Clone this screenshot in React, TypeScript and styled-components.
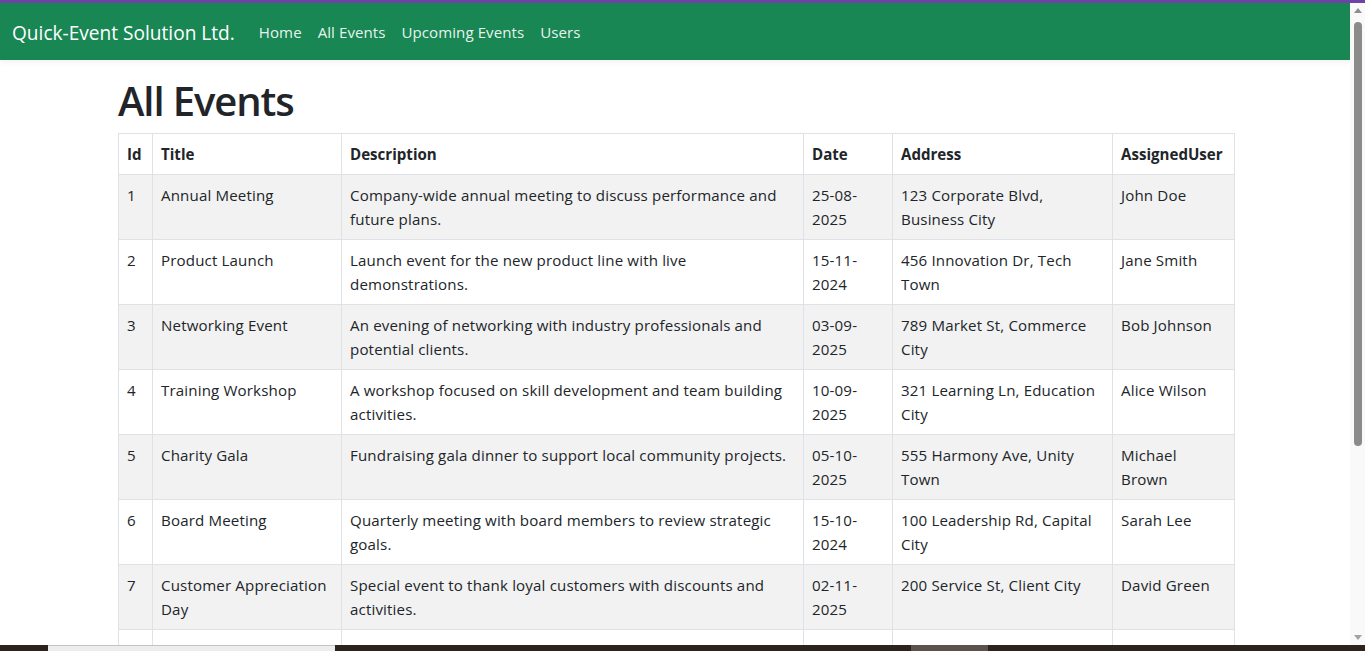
import React from "react";
import styled, { createGlobalStyle } from "styled-components";

const GlobalStyle = createGlobalStyle`
  html, body { margin: 0; padding: 0; overflow: hidden; background: #fff; }
  body {
    font-family: "Open Sans", "Noto Sans", sans-serif;
    font-size: 15.1px;
    line-height: 24px;
    color: #212529;
  }
  * { box-sizing: border-box; }
`;

type EventRow = {
  id: number;
  title: string;
  description: string;
  date: string;
  address: string;
  user: string;
};

const events: EventRow[] = [
  { id: 1, title: "Annual Meeting", description: "Company-wide annual meeting to discuss performance and future plans.", date: "25-08-2025", address: "123 Corporate Blvd, Business City", user: "John Doe" },
  { id: 2, title: "Product Launch", description: "Launch event for the new product line with live demonstrations.", date: "15-11-2024", address: "456 Innovation Dr, Tech Town", user: "Jane Smith" },
  { id: 3, title: "Networking Event", description: "An evening of networking with industry professionals and potential clients.", date: "03-09-2025", address: "789 Market St, Commerce City", user: "Bob Johnson" },
  { id: 4, title: "Training Workshop", description: "A workshop focused on skill development and team building activities.", date: "10-09-2025", address: "321 Learning Ln, Education City", user: "Alice Wilson" },
  { id: 5, title: "Charity Gala", description: "Fundraising gala dinner to support local community projects.", date: "05-10-2025", address: "555 Harmony Ave, Unity Town", user: "Michael Brown" },
  { id: 6, title: "Board Meeting", description: "Quarterly meeting with board members to review strategic goals.", date: "15-10-2024", address: "100 Leadership Rd, Capital City", user: "Sarah Lee" },
  { id: 7, title: "Customer Appreciation Day", description: "Special event to thank loyal customers with discounts and activities.", date: "02-11-2025", address: "200 Service St, Client City", user: "David Green" },
  { id: 8, title: "Holiday Celebration", description: "Annual holiday celebration for all employees with food, music and awards.", date: "20-12-2025", address: "300 Festive Ln, Joyful Hills", user: "Emily White" },
];

const columns = [
  { key: "id", label: "Id", width: 34 },
  { key: "title", label: "Title", width: 189 },
  { key: "description", label: "Description", width: 462 },
  { key: "date", label: "Date", width: 89 },
  { key: "address", label: "Address", width: 220 },
  { key: "user", label: "AssignedUser", width: 122 },
] as const;

const Screen = styled.div`
  display: flex;
  flex-direction: column;
  width: 1365px;
  height: 651px;
  overflow: hidden;
`;

const TopStrip = styled.div`
  height: 3px;
  flex: none;
  background: #6f43a6;
`;

const Viewport = styled.div`
  flex: 1;
  min-height: 0;
  display: flex;
`;

const Page = styled.div`
  flex: 1;
  min-width: 0;
  overflow: hidden;
  display: flex;
  flex-direction: column;
`;

const Navbar = styled.nav`
  flex: none;
  height: 57px;
  display: flex;
  align-items: center;
  padding: 0 12px;
  background: #198754;
  box-shadow: 0 2px 6px rgba(0, 0, 0, 0.06);
  position: relative;
  z-index: 1;
`;

const Brand = styled.a`
  font-size: 19.1px;
  line-height: 30px;
  color: #fff;
  text-decoration: none;
  margin: 2px 16px 0 0;
  padding: 5px 0;
`;

const NavList = styled.ul`
  display: flex;
  list-style: none;
  margin: 0;
  padding: 0;
`;

const NavLink = styled.a`
  display: block;
  padding: 8px 8px;
  color: rgba(255, 255, 255, 0.92);
  text-decoration: none;
  font-size: 15.1px;
  line-height: 24px;
  letter-spacing: 0.05px;
`;

const Container = styled.main`
  width: 100%;
  max-width: 1140px;
  margin: 0 auto;
  padding: 17px 11px 0 13px;
`;

const Heading = styled.h1`
  margin: 0 0 8px;
  font-size: 40px;
  line-height: 48px;
  font-weight: 600;
  letter-spacing: -1.1px;
  color: #212529;
`;

const Table = styled.table`
  width: 100%;
  table-layout: fixed;
  border-collapse: collapse;
  border: 1px solid #dee2e6;
`;

const HeadCell = styled.th`
  text-align: left;
  font-weight: 700;
  padding: 8px;
  border: 1px solid #dee2e6;
  vertical-align: top;
  background: #fff;
`;

const BodyRow = styled.tr<{ $striped: boolean }>`
  background: ${(p) => (p.$striped ? "#f2f2f2" : "#fff")};
`;

const Cell = styled.td`
  padding: 8px;
  border: 1px solid #dee2e6;
  vertical-align: top;
  letter-spacing: 0.15px;
`;

const Scrollbar = styled.div`
  width: 15px;
  flex: none;
  display: flex;
  flex-direction: column;
  align-items: center;
  background: #f9f9f9;
`;

const ArrowButton = styled.div<{ $dir: "up" | "down" }>`
  height: 17px;
  width: 100%;
  flex: none;
  display: flex;
  justify-content: center;
  align-items: center;
  &::before {
    content: "";
    width: 0;
    height: 0;
    border-left: 4.5px solid transparent;
    border-right: 4.5px solid transparent;
    ${(p) =>
      p.$dir === "up"
        ? "border-bottom: 5px solid #8e8e8e; margin-bottom: 2px;"
        : "border-top: 5px solid #a3a3a3; margin-top: 2px;"}
  }
`;

const Thumb = styled.div`
  flex: none;
  width: 8px;
  height: 424px;
  margin-top: 2px;
  border-radius: 4px;
  background: #8b8b8b;
`;

const Track = styled.div`
  flex: 1;
`;

const Taskbar = styled.div`
  height: 6px;
  flex: none;
  display: flex;
  background: #2d231e;
`;

const TaskSegment = styled.div<{ $w: number; $tone: "dark" | "light" | "mid" }>`
  width: ${(p) => p.$w}px;
  flex: none;
  background: ${(p) =>
    p.$tone === "light" ? "#ededed" : p.$tone === "mid" ? "#5c524b" : "transparent"};
  border-top: ${(p) => (p.$tone === "light" ? "1px solid #c4c4c4" : "none")};
`;

export default function App() {
  return (
    <Screen>
      <GlobalStyle />
      <TopStrip />
      <Viewport>
        <Page>
          <Navbar>
            <Brand href="#">Quick-Event Solution Ltd.</Brand>
            <NavList>
              <li><NavLink href="#">Home</NavLink></li>
              <li><NavLink href="#">All Events</NavLink></li>
              <li><NavLink href="#">Upcoming Events</NavLink></li>
              <li><NavLink href="#">Users</NavLink></li>
            </NavList>
          </Navbar>
          <Container>
            <Heading>All Events</Heading>
            <Table>
              <colgroup>
                {columns.map((c) => (
                  <col key={c.key} style={{ width: c.width }} />
                ))}
              </colgroup>
              <thead>
                <tr>
                  {columns.map((c) => (
                    <HeadCell key={c.key}>{c.label}</HeadCell>
                  ))}
                </tr>
              </thead>
              <tbody>
                {events.map((e, i) => (
                  <BodyRow key={e.id} $striped={i % 2 === 0}>
                    <Cell>{e.id}</Cell>
                    <Cell>{e.title}</Cell>
                    <Cell>{e.description}</Cell>
                    <Cell>{e.date}</Cell>
                    <Cell>{e.address}</Cell>
                    <Cell>{e.user}</Cell>
                  </BodyRow>
                ))}
              </tbody>
            </Table>
          </Container>
        </Page>
        <Scrollbar>
          <ArrowButton $dir="up" />
          <Thumb />
          <Track />
          <ArrowButton $dir="down" />
        </Scrollbar>
      </Viewport>
      <Taskbar>
        <TaskSegment $w={48} $tone="dark" />
        <TaskSegment $w={287} $tone="light" />
        <TaskSegment $w={576} $tone="dark" />
        <TaskSegment $w={77} $tone="mid" />
      </Taskbar>
    </Screen>
  );
}
